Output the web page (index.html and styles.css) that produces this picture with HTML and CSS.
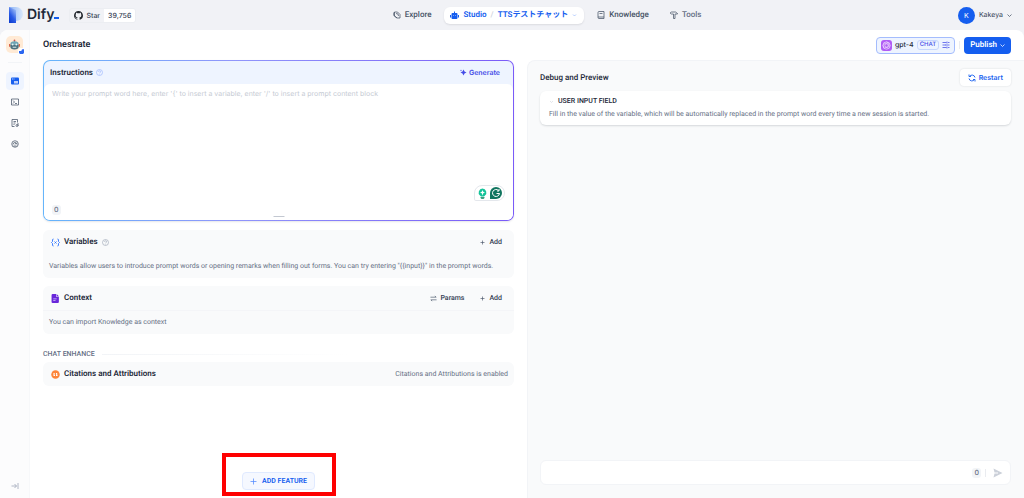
FILE: index.html
```
<!DOCTYPE html>
<html lang="en">
<head>
<meta charset="utf-8">
<title>Dify - Orchestrate</title>
<link rel="stylesheet" href="styles.css">
</head>
<body>
<div class="app">
  <header class="topbar">
    <div class="brand">
      <svg class="logo-mark" viewBox="0 0 14 16" aria-hidden="true">
        <defs>
          <linearGradient id="bar" x1="0.8" y1="0" x2="0.2" y2="1"><stop offset="0" stop-color="#a9c6f7"/><stop offset="0.6" stop-color="#2a5be6"/><stop offset="1" stop-color="#0f3fd0"/></linearGradient>
          <linearGradient id="bowl" x1="0" y1="0" x2="1" y2="0"><stop offset="0" stop-color="#8fb5f7"/><stop offset="1" stop-color="#dbe9fb"/></linearGradient>
        </defs>
        <path d="M0 0h7a7 7 0 0 1 7 7v1a7 7 0 0 1-7 6z" fill="url(#bowl)"/>
        <path d="M0 0l7 3v13H0z" fill="url(#bar)"/>
      </svg>
      <span class="logo-text">Dify<span class="logo-dash"></span></span>
      <a class="star" href="#star">
        <span class="star-label">
          <svg class="i9" viewBox="0 0 16 16" aria-hidden="true"><path fill="#24292f" d="M8 0C3.6 0 0 3.6 0 8c0 3.5 2.3 6.500 5.500 7.600.4.100.5-.2.500-.4V13.800c-2.200.5-2.700-1-2.700-1-.4-.9-.9-1.200-.9-1.200-.7-.5.100-.5.100-.5.800.1 1.200.8 1.200.8.700 1.200 1.900.9 2.300.7.100-.5.300-.9.500-1.100-1.800-.2-3.600-.9-3.600-4 0-.9.300-1.600.8-2.100-.1-.2-.4-1 .1-2.100 0 0 .7-.2 2.200.8a7.500 7.500 0 0 1 4 0c1.500-1 2.200-.8 2.200-.8.400 1.100.2 1.900.1 2.100.5.600.8 1.300.8 2.100 0 3.100-1.900 3.700-3.700 3.900.3.300.6.800.6 1.500v2.200c0 .2.100.5.600.4A8 8 0 0 0 16 8c0-4.400-3.600-8-8-8z"/></svg>
          Star
        </span>
        <span class="star-count">39,756</span>
      </a>
    </div>
    <nav class="nav">
      <a class="nav-item" href="#explore">
        <svg class="i8 line" viewBox="0 0 16 16" aria-hidden="true"><path d="M3 2h6l5 5v7H8L3 10zM3 2L1.500 4v5L8 14M6 5l4 1 1 4"/></svg>
        Explore
      </a>
      <div class="nav-item nav-active">
        <a class="nav-link" href="#studio">
          <svg class="i9" viewBox="0 0 18 16" aria-hidden="true" fill="#155eef"><path d="M8 0h2v3h3a2 2 0 0 1 2 2v8a2 2 0 0 1-2 2H5a2 2 0 0 1-2-2V5a2 2 0 0 1 2-2h3zM0 7h2v5H0zM16 7h2v5h-2z"/><path d="M6 7h2v2H6zM10 7h2v2h-2z" fill="#6f9cf8"/></svg>
          Studio
        </a>
        <span class="slash">/</span>
        <button class="app-switch" type="button">TTSテストチャット
          <svg class="i5" viewBox="0 0 10 10" aria-hidden="true"><path d="M2 3l3 3 3-3" fill="none" stroke="#84adff" stroke-width="1.200"/></svg>
        </button>
      </div>
      <a class="nav-item" href="#knowledge">
        <svg class="i8 line" viewBox="0 0 16 16" aria-hidden="true"><path d="M4 1h10v14H4a2 2 0 0 1-2-2V3a2 2 0 0 1 2-2zM2 12h12M5 5h6"/></svg>
        Knowledge
      </a>
      <a class="nav-item nav-light" href="#tools">
        <svg class="i8 line" viewBox="0 0 16 16" aria-hidden="true"><path d="M1 5V3l2-1h8l4 3v1h-5v9H7V6H3z"/></svg>
        Tools
      </a>
    </nav>
    <button class="account" type="button">
      <span class="avatar">K</span>
      Kakeya
      <svg class="i5" viewBox="0 0 10 10" aria-hidden="true"><path d="M1 3l4 4 4-4" fill="none" stroke="#475467" stroke-width="1.500"/></svg>
    </button>
  </header>

  <div class="shell">
    <aside class="sidebar">
      <div class="app-icon">
        <svg class="robot" viewBox="0 0 24 24" aria-hidden="true">
          <circle cx="12" cy="3" r="2" fill="#d9534b"/><path d="M11 4h2v4h-2z" fill="#6a7b86"/>
          <path d="M3 11a9 6 0 0 1 18 0v3H3z" fill="#6fa5b5"/><path d="M0 11h3v6H0zM21 11h3v6h-3z" fill="#d9654b"/>
          <path d="M3 13h18v4a9 6 0 0 1-18 0z" fill="#4b7280"/><circle cx="8" cy="12" r="2" fill="#e7f6f4"/><circle cx="16" cy="12" r="2" fill="#e7f6f4"/><path d="M8 17h8v2H8z" fill="#d6e6e6"/>
        </svg>
        <span class="app-badge"><svg class="i5" viewBox="0 0 10 10" aria-hidden="true"><path d="M0 4h5V2l3-2 2 1v7l-2 2H2L0 8z" fill="#2a66f0"/></svg></span>
      </div>
      <div class="side-rule"></div>
      <nav class="side-nav">
        <a class="side-link side-on" href="#orchestrate" aria-label="Orchestrate"><svg class="i8" viewBox="0 0 16 16" aria-hidden="true"><path d="M2 1h12a2 2 0 0 1 2 2v10a2 2 0 0 1-2 2H2a2 2 0 0 1-2-2V3a2 2 0 0 1 2-2z" fill="#155eef"/><path d="M2 3h2v2H2zM5 3h2v2H5zM6 8h8v5H6z" fill="#b9cdfb"/></svg></a>
        <a class="side-link" href="#api" aria-label="API access"><svg class="i8 line" viewBox="0 0 16 16" aria-hidden="true"><path d="M1 2h14v12H1zM4 5l3 3-3 3M8 11h4"/></svg></a>
        <a class="side-link" href="#logs" aria-label="Logs"><svg class="i8 line" viewBox="0 0 16 16" aria-hidden="true"><path d="M7 15H2V1h11v6M5 5h5M5 8h4M5 11h2M14 8v6M14 13a2 2 0 1 1-4 0 2 2 0 0 1 4 0"/></svg></a>
        <a class="side-link" href="#monitor" aria-label="Monitoring"><svg class="i8 line" viewBox="0 0 16 16" aria-hidden="true"><circle cx="8" cy="8" r="6.500"/><path d="M4 9a4 4 0 0 1 8 0M8 9l2-3M5 12h6"/></svg></a>
      </nav>
      <button class="expand" type="button" aria-label="Expand sidebar"><svg class="i8" viewBox="0 0 16 16" aria-hidden="true"><path d="M1 8h10M7 4l4 4-4 4M14 2v12" fill="none" stroke="#98a2b3" stroke-width="1.500"/></svg></button>
    </aside>

    <main class="main">
      <div class="titlebar">
        <h1 class="title">Orchestrate</h1>
        <button class="model" type="button">
          <span class="model-icon"><svg class="i9" viewBox="0 0 16 16" aria-hidden="true" fill="none" stroke="#f0e0ff" stroke-width="1.200"><circle cx="8" cy="8" r="3"/><circle cx="8" cy="8" r="6.500"/><path d="M8 1.500l4 3v5M14 8l-4 4-5-1M4 13L2 8l3-4 5 0"/></svg></span>
          gpt-4
          <span class="chip">CHAT</span>
          <svg class="i8" viewBox="0 0 16 16" aria-hidden="true" fill="none" stroke="#444ce7" stroke-width="1.500"><path d="M1 3h8M12 3h3M1 8h3M7 8h8M1 13h8M12 13h3M10 1v4M6 6v4M10 11v4"/></svg>
        </button>
        <span class="vrule"></span>
        <button class="publish" type="button">Publish
          <svg class="i5" viewBox="0 0 10 10" aria-hidden="true"><path d="M1 3l4 4 4-4" fill="none" stroke="#fff" stroke-width="1.500"/></svg>
        </button>
      </div>

      <div class="columns">
        <section class="config">
          <div class="prompt">
            <div class="prompt-inner">
              <div class="prompt-head">
                <label class="heading" for="prompt">Instructions</label>
                <svg class="i7" viewBox="0 0 14 14" aria-hidden="true" fill="none" stroke="#a4bcfd" stroke-width="1.500"><circle cx="7" cy="7" r="6"/><path d="M5 5.500a2 2 0 1 1 2.500 2L7 8.500M7 10v1"/></svg>
                <button class="generate" type="button"><svg class="i7" viewBox="0 0 14 14" aria-hidden="true" fill="#444ce7"><path d="M7 1l2 4 4 2-4 2-2 4-2-4-4-2 4-2zM2 1l.7 1.300L4 3l-1.300.7L2 5l-.7-1.300L0 3l1.300-.7z"/></svg>Generate</button>
              </div>
              <div class="prompt-body">
                <textarea class="prompt-text" id="prompt" placeholder="Write your prompt word here, enter '{' to insert a variable, enter '/' to insert a prompt content block"></textarea>
                <div class="helpers">
                  <svg class="i11" viewBox="0 0 22 22" aria-hidden="true"><path d="M11 1a8 8 0 0 1 5 14l-2 2H8l-2-2A8 8 0 0 1 11 1z" fill="#15c39a"/><path d="M7 18h8v2l-2 2H9l-2-2z" fill="#3a9c80"/><path d="M11 4l1.500 3.500L16 9l-3.500 1.500L11 15l-1.500-4.500L6 9l3.500-1.500z" fill="#fff"/></svg>
                  <svg class="i12" viewBox="0 0 24 24" aria-hidden="true"><path d="M12 0a12 12 0 1 1 0 24H0V12A12 12 0 0 1 12 0z" fill="#11755f"/><path d="M17 7a7 7 0 1 0 2 6h-6M18 4v4h-4" fill="none" stroke="#fff" stroke-width="2"/></svg>
                </div>
                <div class="prompt-foot"><span class="count">0</span></div>
                <span class="grip"></span>
              </div>
            </div>
          </div>

          <section class="card">
            <div class="card-head">
              <svg class="i9" viewBox="0 0 18 16" aria-hidden="true" fill="none" stroke="#2970ff" stroke-width="1.800"><path d="M5 1Q3 1 3 3v3L1 8l2 2v3q0 2 2 2M13 1q2 0 2 2v3l2 2-2 2v3q0 2-2 2M7 6l4 4M11 6l-4 4"/></svg>
              <h2 class="heading">Variables</h2>
              <svg class="i7" viewBox="0 0 14 14" aria-hidden="true" fill="none" stroke="#98a2b3" stroke-width="1.200"><circle cx="7" cy="7" r="6"/><path d="M5 5.500a2 2 0 1 1 2.500 2L7 8.500M7 10v1"/></svg>
              <div class="actions"><button class="act" type="button"><svg class="i7" viewBox="0 0 14 14" aria-hidden="true"><path d="M7 3v8M3 7h8" stroke="#475467" stroke-width="1.300"/></svg>Add</button></div>
            </div>
            <p class="card-text">Variables allow users to introduce prompt words or opening remarks when filling out forms. You can try entering "{{input}}" in the prompt words.</p>
          </section>

          <section class="card card-ruled">
            <div class="card-head">
              <svg class="i9" viewBox="0 0 16 16" aria-hidden="true"><path d="M3 0h6v5h5v9a2 2 0 0 1-2 2H3a2 2 0 0 1-2-2V2a2 2 0 0 1 2-2zM10 0l4 4h-4z" fill="#6927da"/><path d="M4 8h6v1.500H4zM4 11h4v1.500H4z" fill="#d9c8fa"/></svg>
              <h2 class="heading">Context</h2>
              <div class="actions">
                <button class="act" type="button"><svg class="i7" viewBox="0 0 16 16" aria-hidden="true" fill="none" stroke="#475467" stroke-width="1.500"><path d="M1 5h13l-3-3M15 11H2l3 3"/></svg>Params</button>
                <button class="act" type="button"><svg class="i7" viewBox="0 0 14 14" aria-hidden="true"><path d="M7 3v8M3 7h8" stroke="#475467" stroke-width="1.300"/></svg>Add</button>
              </div>
            </div>
            <p class="card-text">You can import Knowledge as context</p>
          </section>

          <div class="group"><h2 class="group-title">CHAT ENHANCE</h2><span class="group-rule"></span></div>
          <section class="card">
            <div class="card-head">
              <svg class="i9" viewBox="0 0 18 18" aria-hidden="true"><circle cx="9" cy="9" r="8.500" fill="#fd853a"/><path d="M8 6H5v6h3V9H6M13 6h-3v6h3V9h-2" fill="#fff"/></svg>
              <h2 class="heading">Citations and Attributions</h2>
              <span class="status">Citations and Attributions is enabled</span>
            </div>
          </section>

          <div class="feature-row">
            <div class="feature-wrap">
              <button class="feature" type="button"><svg class="i7" viewBox="0 0 14 14" aria-hidden="true"><path d="M7 1v12M1 7h12" stroke="#528bff" stroke-width="1.500"/></svg>ADD FEATURE</button>
              <span class="marker"></span>
            </div>
          </div>
        </section>

        <section class="preview">
          <div class="preview-head">
            <h2 class="preview-title">Debug and Preview</h2>
            <button class="restart" type="button"><svg class="i8" viewBox="0 0 16 16" aria-hidden="true" fill="none" stroke="#155eef" stroke-width="1.800"><path d="M14 7A6 6 0 0 0 3 5M2 1v4h4M2 9a6 6 0 0 0 11 2M14 15v-4h-4"/></svg>Restart</button>
          </div>
          <div class="inputs">
            <h3 class="inputs-title"><svg class="i5" viewBox="0 0 10 10" aria-hidden="true"><path d="M2 4l3 3 3-3" fill="none" stroke="#d0d5dd" stroke-width="1.200"/></svg>USER INPUT FIELD</h3>
            <p class="inputs-text">Fill in the value of the variable, which will be automatically replaced in the prompt word every time a new session is started.</p>
          </div>
          <form class="composer">
            <input class="composer-input" type="text" aria-label="Message">
            <span class="count">0</span>
            <span class="vrule"></span>
            <button class="send" type="button" aria-label="Send"><svg class="i10" viewBox="0 0 20 20" aria-hidden="true"><path d="M1 1l18 9-18 9 2-8h7V9H3z" fill="#cbd0d9"/></svg></button>
          </form>
        </section>
      </div>
    </main>
  </div>
</div>
</body>
</html>
```
FILE: styles.css
```
* { box-sizing: border-box; }
body {
  margin: 0;
  background: #f1f2f6;
  color: #1d2939;
  font-family: Inter, "Noto Sans CJK JP", sans-serif;
  font-size: 7px;
  line-height: 10px;
  text-rendering: geometricPrecision;
}
h1, h2, h3, p { margin: 0; font-weight: 600; }
a { color: inherit; text-decoration: none; }
button {
  display: flex;
  align-items: center;
  margin: 0;
  padding: 0;
  border: 0;
  background: none;
  color: inherit;
  font: inherit;
  text-rendering: inherit;
  cursor: pointer;
}
svg { display: block; flex: none; }
.i5 { width: 5px; height: 5px; }
.i7 { width: 7px; height: 7px; }
.i8 { width: 8px; height: 8px; }
.i9 { width: 9px; height: 9px; }
.i10 { width: 10px; height: 10px; }
.i11 { width: 11px; height: 11px; }
.i12 { width: 12px; height: 12px; }
.line { fill: none; stroke: #475467; stroke-width: 1.5; }

.app { display: flex; flex-direction: column; min-height: 100vh; }

/* Compact face for headings, navigation and secondary text */
.nav, .title, .heading, .preview-title, .publish,
.card-text, .status, .inputs-text, .inputs-title,
.group-title, .act, .feature {
  font-family: Roboto, "Noto Sans CJK JP", sans-serif;
}

/* Top bar */
.topbar {
  display: flex;
  align-items: center;
  justify-content: space-between;
  height: 30px;
  padding: 0 12px 0 9px;
}
.brand { display: flex; align-items: center; }
.logo-mark { width: 14px; height: 16px; }
.logo-text {
  display: flex;
  align-items: baseline;
  margin-left: 4px;
  font-size: 14px;
  line-height: 18px;
  font-weight: 600;
}
.logo-dash { width: 5px; height: 2px; background: #155eef; }
.star {
  display: flex;
  margin-left: 10px;
  border: 1px solid #eceef2;
  border-radius: 3px;
  color: #344054;
  font-weight: 500;
  line-height: 13px;
  overflow: hidden;
}
.star-label { display: flex; align-items: center; gap: 3px; padding: 0 4px; }
.star-count { padding: 0 4px; background: #fff; }
.nav { display: flex; align-items: center; gap: 5px; font-size: 8px; font-weight: 500; color: #475467; }
.nav-item { display: flex; align-items: center; gap: 4px; padding: 0 8px; }
.nav-light { color: #667085; }
.nav-active {
  height: 17px;
  padding: 0 7px 0 6px;
  border-radius: 6px;
  background: #fff;
  box-shadow: 0 1px 2px #1018281a;
  color: #155eef;
  font-weight: 600;
}
.nav-link, .app-switch { display: flex; align-items: center; gap: 4px; }
.slash { color: #d0d5dd; }
.account { gap: 4px; color: #344054; font-size: 7px; }
.avatar {
  width: 17px;
  border-radius: 50%;
  background: #155eef;
  color: #fff;
  text-align: center;
  line-height: 17px;
}

/* Shell */
.shell {
  display: flex;
  flex: 1;
  border-radius: 8px 8px 0 0;
  background: #fff;
  overflow: hidden;
}
.sidebar {
  display: flex;
  flex-direction: column;
  align-items: center;
  width: 30px;
  padding: 6px 0 8px;
  border-right: 1px solid #f7f8fa;
  background: #fcfcfd;
}
.app-icon { position: relative; padding: 3px; border-radius: 5px; background: #ffead5; }
.robot { width: 11px; height: 11px; }
.app-badge {
  position: absolute;
  right: -2px;
  bottom: -2px;
  padding: 1px;
  border-radius: 3px;
  background: #fff;
}
.side-rule { width: 14px; height: 1px; margin: 9px 0; background: #f2f4f7; }
.side-nav { display: flex; flex-direction: column; gap: 3px; }
.side-link { padding: 5px; border-radius: 4px; }
.side-on { background: #eef4ff; }
.expand { margin-top: auto; }

.main { display: flex; flex: 1; flex-direction: column; min-width: 0; }
.titlebar { display: flex; align-items: center; height: 30px; padding: 0 13px; }
.title { margin-right: auto; font-size: 9px; line-height: 12px; }
.model {
  gap: 3px;
  height: 17px;
  padding: 0 4px;
  border: 1px solid #a4bcfd;
  border-radius: 4px;
  background: #eef4ff;
  font-weight: 500;
}
.model-icon { padding: 1px; border-radius: 3px; background: #b15cf5; }
.chip {
  padding: 0 2px;
  border: 1px solid #c7d7fe;
  border-radius: 3px;
  color: #444ce7;
  font-size: 6px;
  line-height: 8px;
}
.vrule { width: 1px; height: 8px; margin: 0 4px; background: #eaecf0; }
.publish {
  gap: 3px;
  height: 17px;
  padding: 0 6px;
  border-radius: 4px;
  background: #155eef;
  color: #fff;
  font-size: 8px;
  font-weight: 600;
}

/* Configuration column */
.columns { display: grid; grid-template-columns: 497fr 497fr; flex: 1; }
.config { display: flex; flex-direction: column; padding: 0 13px 8px; }
.heading { font-size: 8px; font-weight: 600; }
.prompt {
  padding: 1px;
  margin-bottom: 9px;
  border-radius: 7px;
  background: linear-gradient(90deg, #65b5fb, #9096fb 40%, #7a5af8);
  box-shadow: 0 1px 2px #1018281a;
}
.prompt-inner { border-radius: 6px; background: #eef4ff; overflow: hidden; }
.prompt-head { display: flex; align-items: center; gap: 3px; height: 23px; padding: 0 13px 0 6px; }
.generate { gap: 2px; margin-left: auto; color: #444ce7; font-weight: 600; }
.prompt-body {
  position: relative;
  display: flex;
  flex-direction: column;
  height: 136px;
  padding: 5px 8px 5px;
  border-radius: 6px 6px 0 0;
  background: #fff;
}
.prompt-text {
  flex: 1;
  padding: 0;
  border: 0;
  outline: 0;
  background: none;
  font: inherit;
  text-rendering: inherit;
  resize: none;
}
.prompt-text::placeholder { color: #c6cbd4; }
.helpers {
  position: absolute;
  right: 8px;
  bottom: 19px;
  display: flex;
  align-items: center;
  gap: 2px;
  padding: 1px 2px;
  border: 1px solid #e4e7ec;
  border-radius: 9px 9px 9px 2px;
  background: #fff;
}
.prompt-foot { display: flex; }
.count {
  padding: 0 2px;
  border-radius: 3px;
  background: #f2f4f7;
  color: #667085;
  font-weight: 500;
}
.grip {
  position: absolute;
  left: 50%;
  bottom: 3px;
  width: 11px;
  height: 1px;
  transform: translateX(-50%);
  background: #c3c8d1;
}
.card { margin-bottom: 8px; border-radius: 6px; background: #f9fafb; }
.card-head { display: flex; align-items: center; gap: 4px; height: 24px; padding: 0 6px 0 8px; }
.actions { display: flex; gap: 15px; margin-left: auto; padding-right: 6px; }
.act { gap: 3px; color: #344054; font-weight: 500; }
.card-text, .status, .inputs-text { color: #667085; font-weight: 400; }
.card-text { padding: 7px 6px; }
.card-ruled .card-text { padding-top: 6px; border-top: 1px solid #f4f5f8; }
.status { margin-left: auto; }
.group { display: flex; align-items: center; gap: 7px; padding: 7px 0 3px; }
.group-title { color: #667085; font-size: 7px; font-weight: 500; }
.group-rule { flex: 1; height: 1px; background: linear-gradient(90deg, #f2f4f7, #fff 60%); }
.feature-row { display: flex; justify-content: center; margin-top: auto; }
.feature-wrap { position: relative; }
.feature {
  gap: 5px;
  height: 18px;
  padding: 0 7px;
  border: 1px solid #e0eaff;
  border-radius: 4px;
  background: #f5f8ff;
  color: #155eef;
  font-weight: 600;
}
.marker {
  position: absolute;
  inset: -19px -21px -6px -20px;
  border: 4px solid #fe0000;
  pointer-events: none;
}

/* Preview column */
.preview {
  display: flex;
  flex-direction: column;
  padding: 8px 13px 13px 12px;
  border: 1px solid #f2f4f7;
  border-width: 1px 0 0 1px;
  border-radius: 8px 0 0 0;
  background: #f9fafb;
}
.preview-head { display: flex; align-items: center; justify-content: space-between; margin-bottom: 5px; }
.preview-title { font-size: 8px; font-weight: 500; }
.restart {
  gap: 3px;
  height: 17px;
  padding: 0 8px;
  border-radius: 4px;
  background: #fff;
  box-shadow: 0 0 2px #10182826;
  color: #155eef;
  font-weight: 600;
}
.inputs { padding: 5px 9px 6px; border-radius: 6px; background: #fff; box-shadow: 0 1px 2px #10182826; }
.inputs-title { display: flex; align-items: center; gap: 4px; margin-bottom: 3px; font-size: 7px; font-weight: 500; }
.composer {
  display: flex;
  align-items: center;
  height: 25px;
  margin-top: auto;
  padding: 0 7px;
  border: 1px solid #f2f4f7;
  border-radius: 6px;
  background: #fff;
}
.composer-input { flex: 1; min-width: 0; border: 0; outline: 0; background: none; font: inherit; }
.composer .vrule { margin-right: 7px; }
```
